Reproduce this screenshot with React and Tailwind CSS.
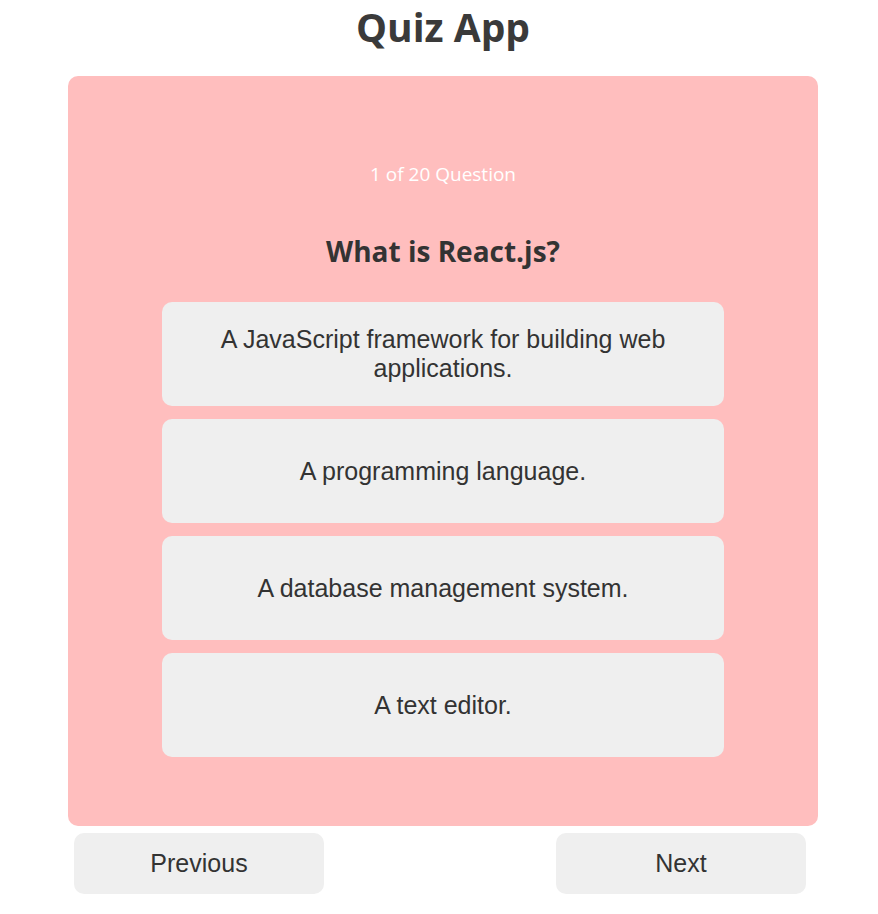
export default function App() {
  const options = [
    "A JavaScript framework for building web applications.",
    "A programming language.",
    "A database management system.",
    "A text editor.",
  ];
  return (
    <div className="min-h-screen bg-white pl-[8px] text-[#333333]">
      <h1 className="pt-[2px] text-center font-['Open_Sans','Noto_Sans',sans-serif] text-[39px] font-bold leading-[50px] text-[#3a3a3a]">
        Quiz App
      </h1>
      <div className="mx-auto mt-[24px] flex h-[750px] w-[750px] flex-col items-center rounded-[10px] bg-[#ffbebe] pt-[86px]">
        <p className="font-['Open_Sans','Noto_Sans',sans-serif] text-[19px] leading-[24px] text-white">
          1 of 20 Question
        </p>
        <h2 className="mt-[48px] font-['Open_Sans','Noto_Sans',sans-serif] text-[28px] font-bold leading-[34px] text-[#333333]">
          What is React.js?
        </h2>
        <div className="mt-[34px] flex w-[562px] flex-col gap-[13px]">
          {options.map((o) => (
            <button
              key={o}
              className="flex h-[104px] items-center justify-center rounded-[10px] bg-[#efefef] px-[20px] text-center font-['Liberation_Sans',Arial,sans-serif] text-[25px] leading-[29px] text-[#333333]"
            >
              {o}
            </button>
          ))}
        </div>
      </div>
      <div className="mx-auto mt-[7px] flex w-[750px] justify-between pl-[6px] pr-[12px]">
        <button className="h-[61px] w-[250px] rounded-[10px] bg-[#efefef] font-['Liberation_Sans',Arial,sans-serif] text-[25px] text-[#333333]">
          Previous
        </button>
        <button className="h-[61px] w-[250px] rounded-[10px] bg-[#efefef] font-['Liberation_Sans',Arial,sans-serif] text-[25px] text-[#333333]">
          Next
        </button>
      </div>
    </div>
  );
}
